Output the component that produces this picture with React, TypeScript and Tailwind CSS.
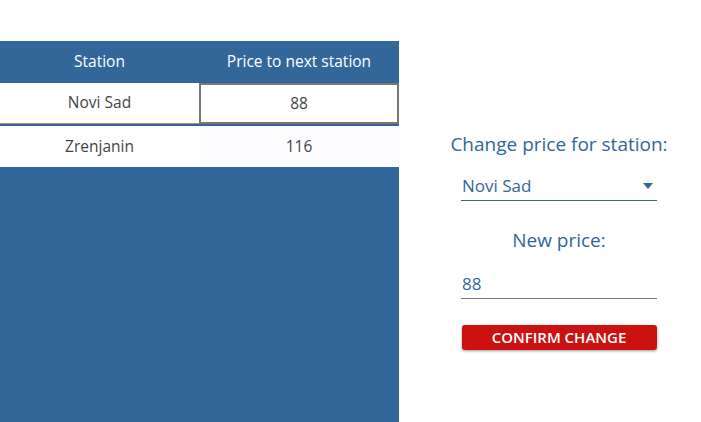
import React from "react";

const font = { fontFamily: '"Segoe UI", "Open Sans", "Noto Sans", sans-serif' };

export default function App() {
  return (
    <div className="flex h-[422px] w-[701px] bg-white" style={font}>
      <div className="mt-[41px] flex w-[399px] flex-col bg-[#336699]">
        <div className="flex h-[42px] items-center text-[15.5px] text-white">
          <div className="w-[199px] text-center">Station</div>
          <div className="w-[200px] text-center">Price to next station</div>
        </div>
        <div className="flex h-[41px] bg-white text-[15.5px] text-[#444]">
          <div className="flex w-[199px] items-center justify-center border-b border-[#999]">Novi Sad</div>
          <div className="flex w-[200px] items-center justify-center border-2 border-[#777]">88</div>
        </div>
        <div className="mt-[2px] flex h-[41px] bg-white text-[15.5px] text-[#444]">
          <div className="flex w-[199px] items-center justify-center">Zrenjanin</div>
          <div className="flex w-[200px] items-center justify-center bg-[#fdfdff]">116</div>
        </div>
      </div>
      <div className="flex w-[302px] flex-col items-center pl-[18px] pt-[131px] text-[#336699]">
        <div className="text-[19px] leading-[26px]">Change price for station:</div>
        <div className="mt-[15px] flex h-[29px] w-[196px] items-center justify-between border-b border-[#336699] pl-[1px] pr-[4px] text-[17px]">
          <span>Novi Sad</span>
          <svg width="10" height="6" viewBox="0 0 10 6">
            <path d="M0 0h10L5 6z" fill="#336699" />
          </svg>
        </div>
        <div className="mt-[26px] text-[19px] leading-[26px]">New price:</div>
        <div className="mt-[16px] flex h-[30px] w-[196px] items-center border-b border-[#777] pl-[1px] text-[17px]">88</div>
        <button className="mt-[26px] h-[25px] w-[195px] rounded-[3px] bg-[#cc1111] text-[15px] font-semibold text-white shadow-[0_1px_3px_rgba(0,0,0,0.4)]">
          CONFIRM CHANGE
        </button>
      </div>
    </div>
  );
}
